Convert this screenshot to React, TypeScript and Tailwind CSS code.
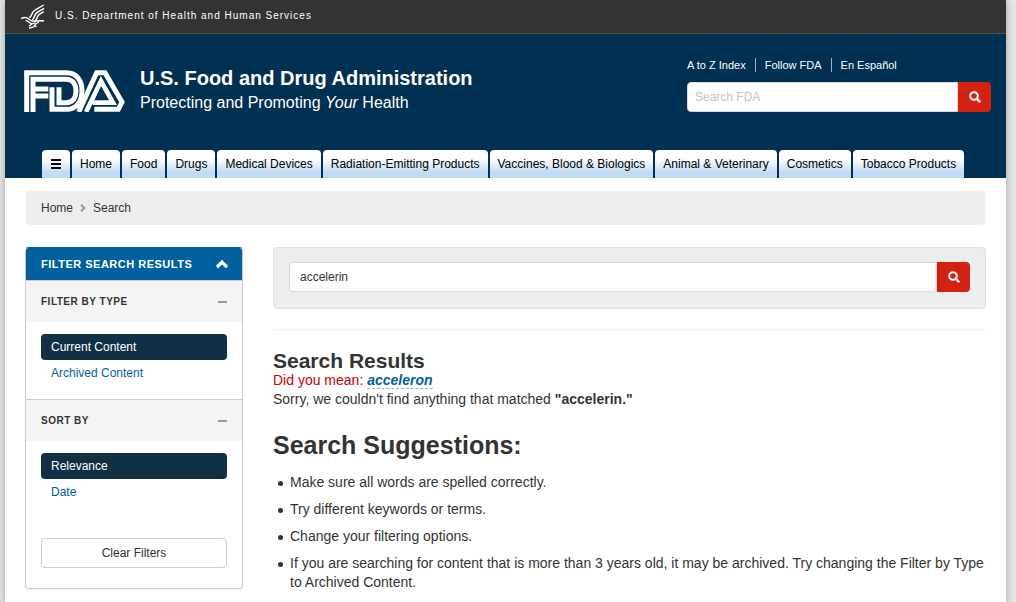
import { useState } from "react";

const utilityLinks = ["A to Z Index", "Follow FDA", "En Español"];

const navItems = [
  "Home",
  "Food",
  "Drugs",
  "Medical Devices",
  "Radiation-Emitting Products",
  "Vaccines, Blood & Biologics",
  "Animal & Veterinary",
  "Cosmetics",
  "Tobacco Products",
];

const suggestions = [
  "Make sure all words are spelled correctly.",
  "Try different keywords or terms.",
  "Change your filtering options.",
  "If you are searching for content that is more than 3 years old, it may be archived. Try changing the Filter by Type to Archived Content.",
];

const tabClass =
  "flex h-7 items-center rounded-t bg-linear-to-b from-white from-30% to-[#c0dbf4] to-80% px-2 text-xs whitespace-nowrap text-black";

const HhsLogo = () => (
  <svg viewBox="0 0 72 78" className="h-[26px] w-6" fill="none" stroke="white" strokeWidth="4.5" aria-hidden="true">
    <path d="M68 6C56 15 43 17 36 27c-5 7-4 13-11 17" />
    <path d="M69 16C59 23 48 25 43 34c-4 7-3 12-9 17" />
    <path d="M68 26C59 32 53 33 50 40c-3 7-3 12-10 16" />
    <path d="M0 47c11-5 17-5 23 1 6 5 10 8 18 7 10-1 13-4 28-1" />
    <path d="M14 52c7 2 10 6 15 9 5 2 9 0 14-1M54 57c-8 3-12 7-16 14-4 3-9 2-14 5M33 62l-9 8M41 66l5 6" strokeWidth="4" />
  </svg>
);

const FdaLogo = () => (
  <svg
    viewBox="0 0 303 126"
    className="h-[42px] w-[101px]"
    fill="none"
    stroke="white"
    strokeWidth="15"
    aria-label="FDA"
    role="img"
  >
    <path d="M8 126V8h120c30 0 46 25 46 55s-16 55-46 55H84V52" />
    <path d="M27 126V28h99c23 0 30 18 30 35s-7 35-30 35h-21V52" />
    <path d="M27 57h46M27 78h46" />
    <path d="M164 126L218 8h25l51 88-11 22h-72" />
    <path d="M186 126L231 33l36 65h-61" strokeWidth="14" />
  </svg>
);

const SearchIcon = () => (
  <svg viewBox="0 0 12 12" className="size-3" fill="none" stroke="currentColor" strokeWidth="2" aria-hidden="true">
    <circle cx="5" cy="5" r="3.8" />
    <path d="M7.5 7.5l3.7 3.7" strokeWidth="2.4" />
  </svg>
);

const MenuIcon = () => (
  <svg viewBox="0 0 12 10" className="h-2.5 w-3" fill="currentColor" aria-hidden="true">
    <path d="M1 0h10v2H1zM1 4h10v2H1zM1 8h10v2H1z" />
  </svg>
);

type ChevronProps = {
  className: string;
  path: string;
};

const Chevron = ({ className, path }: ChevronProps) => (
  <svg viewBox="0 0 12 12" className={className} fill="none" stroke="currentColor" strokeWidth="3.2" aria-hidden="true">
    <path d={path} />
  </svg>
);

type SearchBoxProps = {
  label: string;
  inputClass: string;
  placeholder?: string;
  defaultValue?: string;
};

const SearchBox = ({ label, inputClass, placeholder, defaultValue }: SearchBoxProps) => (
  <form className="flex h-[30px]" onSubmit={(e) => e.preventDefault()}>
    <input
      type="text"
      aria-label={label}
      placeholder={placeholder}
      defaultValue={defaultValue}
      className={`h-full min-w-0 flex-1 rounded-l border border-[#d9d9d9] bg-white text-xs text-[#333] placeholder:text-[#c4c4c4] ${inputClass}`}
    />
    <button
      type="submit"
      aria-label={label}
      className="flex w-[33px] items-center justify-center rounded-r bg-[#d42211] text-white"
    >
      <SearchIcon />
    </button>
  </form>
);

type FilterGroupProps = {
  title: string;
  options: string[];
};

const FilterGroup = ({ title, options }: FilterGroupProps) => {
  const [selected, setSelected] = useState(options[0]);

  return (
    <section className="border-t border-[#ccc] first:border-t-0">
      <h3 className="flex h-[41px] items-center justify-between bg-[#f4f4f4] px-[15px] text-[10px] font-bold tracking-[0.5px] text-[#333] uppercase">
        {title}
        <span className="h-0.5 w-[9px] bg-[#999]" />
      </h3>
      <ul className="px-[15px] pt-3 pb-[13px]">
        {options.map((option) => (
          <li key={option}>
            <a
              href="#"
              onClick={() => setSelected(option)}
              className={
                option === selected
                  ? "block rounded bg-[#112f45] px-2.5 text-xs leading-[26px] text-white"
                  : "block px-2.5 text-xs leading-[26px] text-[#0060a0]"
              }
            >
              {option}
            </a>
          </li>
        ))}
      </ul>
    </section>
  );
};

const Header = () => (
  <header>
    <div className="flex h-[34px] items-center gap-2.5 border-b border-[#4f4f4f] bg-[#333] px-4 pb-0.5">
      <HhsLogo />
      <a href="#" className="text-[10px] tracking-[1px] text-white">
        U.S. Department of Health and Human Services
      </a>
    </div>
    <div className="bg-[#003052]">
      <div className="flex h-[116px] items-start justify-between pr-[15px] pl-[19px]">
        <div className="flex items-center gap-[15px] pt-8">
          <FdaLogo />
          <div className="text-white">
            <h1 className="text-xl leading-6 font-bold">U.S. Food and Drug Administration</h1>
            <p className="text-base leading-[26px]">
              Protecting and Promoting <em>Your</em> Health
            </p>
          </div>
        </div>
        <div className="w-[304px] pt-6">
          <ul className="mb-2.5 flex text-[11px] leading-[14px] text-white">
            {utilityLinks.map((link) => (
              <li key={link} className="border-l border-[#9fb1bf] px-[9px] first:border-l-0 first:pl-0">
                <a href="#">{link}</a>
              </li>
            ))}
          </ul>
          <SearchBox label="Search FDA" placeholder="Search FDA" inputClass="px-[7px]" />
        </div>
      </div>
      <nav className="flex gap-0.5 px-[37px]">
        <button type="button" aria-label="Menu" className={tabClass}>
          <MenuIcon />
        </button>
        {navItems.map((item) => (
          <a key={item} href="#" className={tabClass}>
            {item}
          </a>
        ))}
      </nav>
    </div>
  </header>
);

const Sidebar = () => (
  <aside className="w-[218px] shrink-0 self-start overflow-hidden rounded border border-[#ccc] border-t-[#0060a0] shadow-xs">
    <h2 className="flex h-8 items-center justify-between bg-[#0060a0] pr-3.5 pl-[15px] text-[11px] font-bold tracking-[0.5px] whitespace-nowrap text-white uppercase">
      Filter Search Results
      <Chevron className="size-3" path="M1 9l5-5 5 5" />
    </h2>
    <div className="border-t border-[#ccc]">
      <FilterGroup title="Filter by Type" options={["Current Content", "Archived Content"]} />
      <FilterGroup title="Sort By" options={["Relevance", "Date"]} />
    </div>
    <div className="px-[15px] py-5">
      <button type="button" className="h-[30px] w-full rounded border border-[#ccc] bg-white text-xs text-[#333]">
        Clear Filters
      </button>
    </div>
  </aside>
);

const Results = () => (
  <main className="min-w-0 flex-1">
    <div className="rounded border border-[#e0e0e0] bg-[#ededed] px-[15px] pt-3.5 pb-4">
      <SearchBox label="Search" defaultValue="accelerin" inputClass="px-2.5" />
    </div>
    <hr className="my-5 border-[#eee]" />
    <h2 className="text-[21px] leading-[21px] font-bold">Search Results</h2>
    <p className="text-sm leading-[19px] text-[#cc0000]">
      Did you mean:{" "}
      <a href="#" className="border-b border-dashed border-[#80b0d0] font-bold text-[#0060a0] italic">
        acceleron
      </a>
    </p>
    <p className="text-sm leading-[19px]">
      Sorry, we couldn't find anything that matched <strong>"accelerin."</strong>
    </p>
    <h2 className="mt-5 mb-3 text-[25px] leading-8 font-bold">Search Suggestions:</h2>
    <ul className="space-y-2 pl-[5px] text-sm leading-[19px]">
      {suggestions.map((text) => (
        <li
          key={text}
          className="flex gap-[7px] before:mt-2 before:size-[5px] before:shrink-0 before:rounded-full before:bg-[#333]"
        >
          {text}
        </li>
      ))}
    </ul>
  </main>
);

const App = () => (
  <div className="min-h-screen bg-[#e6e6e6] pr-2.5 pl-[5px] font-['Liberation_Sans',Arial,sans-serif] text-[#333]">
    <div className="min-h-screen bg-white shadow-[0_0_8px_rgba(0,0,0,0.3)]">
      <Header />
      <div className="px-5 pt-[13px] pb-3">
        <nav
          aria-label="Breadcrumb"
          className="mx-px flex h-[34px] items-center gap-1.5 rounded bg-[#ededed] px-[15px] text-xs"
        >
          <a href="#">Home</a>
          <Chevron className="size-2 text-[#999]" path="M3 1l5 5-5 5" />
          <span>Search</span>
        </nav>
        <div className="mt-[22px] flex gap-[30px]">
          <Sidebar />
          <Results />
        </div>
      </div>
    </div>
  </div>
);

export default App;
